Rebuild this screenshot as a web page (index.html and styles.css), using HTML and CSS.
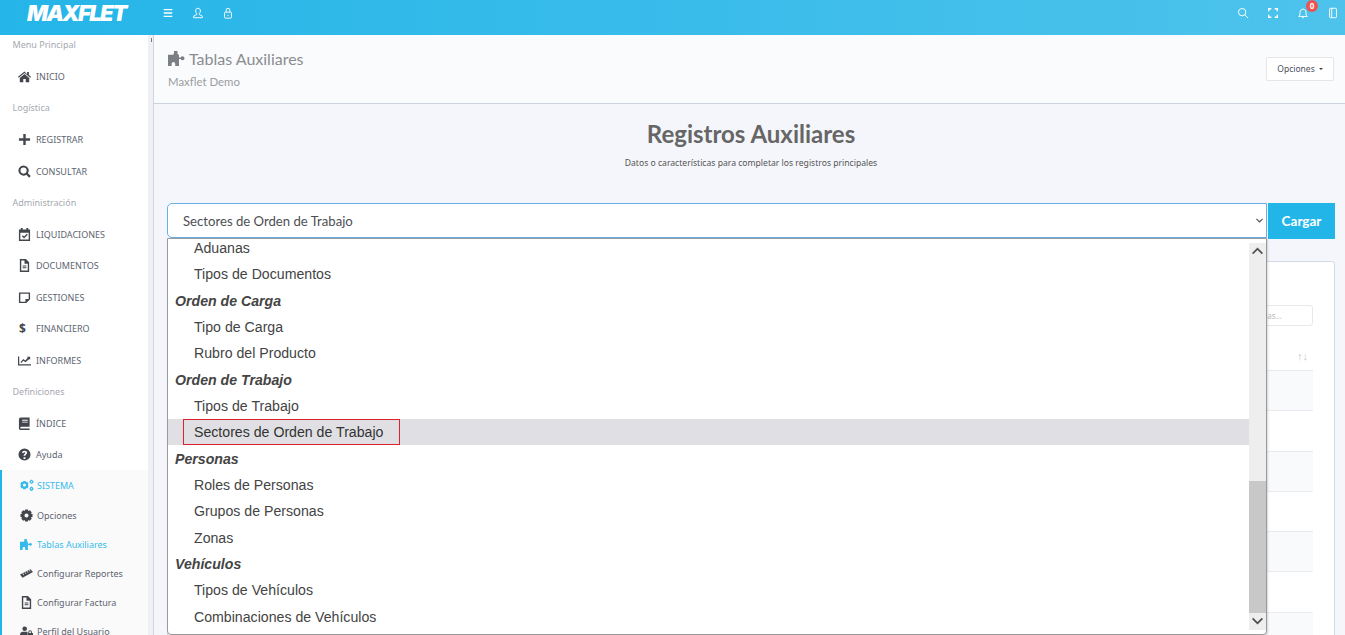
FILE: index.html
```html
<!DOCTYPE html>
<html lang="es">
<head>
<meta charset="utf-8">
<title>Maxflet - Tablas Auxiliares</title>
<link rel="stylesheet" href="styles.css">
</head>
<body>
<svg class="defs" aria-hidden="true">
  <symbol id="i-home" viewBox="0 0 16 14"><path d="M8 .8 0 7.400l.9 1.100L8 2.600l7.100 5.900.9-1.100-2.600-2.100V1.400h-2.200v2.700zM2.200 8.800V14h4.300V10h3v4h4.300V8.800L8 4z"/></symbol>
  <symbol id="i-plus" viewBox="0 0 14 14"><path d="M5.700 1h2.600v4.700H13v2.600H8.300V13H5.700V8.300H1V5.700h4.700z"/></symbol>
  <symbol id="i-search" viewBox="0 0 14 14"><path d="M6 .5a5.500 5.500 0 1 0 3 10.100l3 3 1.700-1.700-3-3A5.500 5.500 0 0 0 6 .5zm0 2.200a3.300 3.300 0 1 1 0 6.600 3.300 3.300 0 0 1 0-6.600z"/></symbol>
  <symbol id="i-cal" viewBox="0 0 14 14"><path fill-rule="evenodd" d="M3 0h2v1.500h4V0h2v1.500h2V14H1V1.500h2zM2.500 5v7.500h9V5zm7 1.200 1 1-4 4-2.300-2.300 1-1 1.300 1.300z"/></symbol>
  <symbol id="i-file" viewBox="0 0 14 14"><path fill-rule="evenodd" d="M2 0h6.500L12 3.500V14H2zm1.500 1.500v11h7V5H7V1.500zM5 7h4v1H5zm0 2h4v1H5z"/></symbol>
  <symbol id="i-note" viewBox="0 0 14 14"><path fill-rule="evenodd" d="M1 1.500h12V9l-4 4H1zm1.500 1.500v8.500H8V8.500h3.500V3z"/></symbol>
  <symbol id="i-chart" viewBox="0 0 16 14"><path d="M0 2h1.500v9.500H16V13H0zM3 9l3.500-4 2.500 2 3-3.500-1-1H15v3.500l-1-1L9.200 9.300 6.700 7.200 4 10.200z"/></symbol>
  <symbol id="i-book" viewBox="0 0 14 14"><path fill-rule="evenodd" d="M3 .5h9.500v10H3.500a1 1 0 0 0 0 2h9V14H3a2 2 0 0 1-2-2V2.500a2 2 0 0 1 2-2zm1.500 2.500v1h6V3zm0 2v1h6V5z"/></symbol>
  <symbol id="i-help" viewBox="0 0 14 14"><path fill-rule="evenodd" d="M7 .5a6.500 6.500 0 1 1 0 13 6.500 6.500 0 0 1 0-13zM6 10v1.800h2V10zM7 3C5.500 3 4.500 3.800 4.300 5.200l1.700.3c.1-.6.400-.9 1-.9s.9.300.9.700c0 .9-1.900 1-1.900 3h1.900c0-1.200 1.900-1.400 1.900-3.100C9.800 4 8.600 3 7 3z"/></symbol>
  <symbol id="i-cogs" viewBox="0 0 18 14"><path fill-rule="evenodd" d="M5 1.500h3l.4 1.500 1.500-.5 1.600 2.700-1.100 1.300 1.100 1.300L9.900 10.500l-1.500-.5-.4 1.500H5L4.600 10l-1.500.5L1.500 7.800l1.100-1.300-1.100-1.300 1.600-2.700 1.500.5zm1.500 3.200a1.800 1.800 0 1 0 0 3.600 1.800 1.800 0 0 0 0-3.600z"/><path fill-rule="evenodd" d="M14 0h2l.3 1 1 .6v1.800l-1 .6-.3 1h-2l-.3-1-1-.6V1.600l1-.6zm1 1.700a.8.800 0 1 0 0 1.600.8.800 0 0 0 0-1.600zM14 8.500h2l.3 1 1 .6v1.800l-1 .6-.3 1h-2l-.3-1-1-.6v-1.800l1-.6zm1 1.700a.8.800 0 1 0 0 1.600.8.800 0 0 0 0-1.600z"/></symbol>
  <symbol id="i-cog" viewBox="0 0 14 14"><path fill-rule="evenodd" d="M5.500.5h3l.4 1.700 1.600-.8 2.100 2.100-.8 1.600 1.700.4v3l-1.700.4.800 1.600-2.100 2.100-1.600-.8-.4 1.700h-3l-.4-1.700-1.600.8-2.100-2.100.8-1.600L.5 8.500v-3l1.700-.4-.8-1.600 2.100-2.100 1.600.8zM7 4.800a2.200 2.200 0 1 0 0 4.400 2.200 2.200 0 0 0 0-4.400z"/></symbol>
  <symbol id="i-puzzle" viewBox="0 0 18 15"><path d="M6 0h3.500v2.200C9.500 3 10 3.200 10.300 3.800H11V6.500h1.800c.3-.8 1-1.200 1.700-1.200 1.200 0 2 1 2 2s-.8 2-2 2c-.8 0-1.400-.4-1.700-1.200H11V15H7.200v-2c0-1.300-.9-2-1.800-2s-1.800.7-1.800 2v2H0V3.800h5c.4-.6 1-1 1-1.600z"/></symbol>
  <symbol id="i-ruler" viewBox="0 0 18 14"><path d="M0 8.500 14.500 1 18 5 3.500 13zM3.500 7.300l1.300 2 .8-.5-1.300-2zm3-1.600 1.300 2 .8-.5-1.300-2zm3-1.600 1.300 2 .8-.5-1.300-2zm3-1.600 1.300 2 .8-.5-1.300-2z"/></symbol>
  <symbol id="i-userlock" viewBox="0 0 18 14"><path d="M6.500 0a3.200 3.200 0 1 1 0 6.400 3.200 3.200 0 0 1 0-6.400zM0 14v-2.500C0 9 2 7.500 4 7.500h5c.6 0 1 .1 1.500.3V14zM11.500 9V7.800a2.500 2.500 0 0 1 5 0V9H18v5h-7V9zm1.300 0h2.400V7.800a1.200 1.200 0 0 0-2.400 0z"/></symbol>
  <symbol id="i-chev" viewBox="0 0 14 10"><path d="M1.500 1 7 6.200 12.500 1 14 2.500 7 9.500 0 2.500z"/></symbol>
</svg>

<header class="topbar">
  <div class="logo">MAXFLET</div>
  <nav class="top-left">
    <svg class="tb-icon bold" viewBox="0 0 14 14"><path d="M2 3h10M2 7h10M2 11h10"/></svg>
    <svg class="tb-icon" viewBox="0 0 14 14"><path d="M7 1.500c-1.800 0-2.800 1.200-2.800 3 0 1.300.6 2.400 1.300 3v1.300L2 10.500v2h10v-2L8.500 8.800V7.500c.7-.6 1.300-1.700 1.300-3 0-1.800-1-3-2.800-3z"/></svg>
    <svg class="tb-icon" viewBox="0 0 14 14"><rect x="3" y="6" width="8" height="7" rx="1"/><path d="M4.800 6V3.800a2.200 2.200 0 0 1 4.400 0V6M7 9v1.500"/></svg>
  </nav>
  <nav class="top-right">
    <svg class="tb-icon" viewBox="0 0 14 14"><circle cx="6" cy="6" r="4.300"/><path d="m9.200 9.200 3.800 3.800"/></svg>
    <svg class="tb-icon bold" viewBox="0 0 14 14"><path d="M2 5V2h3M9 2h3v3M12 9v3H9M5 12H2V9"/></svg>
    <span class="bell">
      <svg class="tb-icon" viewBox="0 0 14 14"><path d="M2 11c1.200-1 1.500-2 1.500-4.500C3.500 4 5 2.500 7 2.500s3.500 1.500 3.500 4c0 2.500.3 3.500 1.500 4.500zM6 12.500h2"/></svg>
      <b class="badge">0</b>
    </span>
    <svg class="tb-icon" viewBox="0 0 14 14"><rect x="3" y="1.500" width="8" height="11" rx="1"/><path d="M5.500 1.500v11"/></svg>
  </nav>
</header>

<div class="shell">
  <aside class="sidebar">
    <div class="side-inner">
      <p class="side-label">Menu Principal</p>
      <a class="side-item"><svg class="ic"><use href="#i-home"/></svg>INICIO</a>
      <p class="side-label">Logística</p>
      <a class="side-item"><svg class="ic"><use href="#i-plus"/></svg>REGISTRAR</a>
      <a class="side-item"><svg class="ic"><use href="#i-search"/></svg>CONSULTAR</a>
      <p class="side-label">Administración</p>
      <a class="side-item"><svg class="ic"><use href="#i-cal"/></svg>LIQUIDACIONES</a>
      <a class="side-item"><svg class="ic"><use href="#i-file"/></svg>DOCUMENTOS</a>
      <a class="side-item"><svg class="ic"><use href="#i-note"/></svg>GESTIONES</a>
      <a class="side-item"><span class="ic dollar">$</span>FINANCIERO</a>
      <a class="side-item"><svg class="ic"><use href="#i-chart"/></svg>INFORMES</a>
      <p class="side-label">Definiciones</p>
      <a class="side-item"><svg class="ic"><use href="#i-book"/></svg>ÍNDICE</a>
      <a class="side-item"><svg class="ic"><use href="#i-help"/></svg>Ayuda</a>
      <div class="side-group">
        <a class="side-item active"><svg class="ic wide"><use href="#i-cogs"/></svg>SISTEMA</a>
        <a class="side-sub"><svg class="ic"><use href="#i-cog"/></svg>Opciones</a>
        <a class="side-sub active"><svg class="ic"><use href="#i-puzzle"/></svg>Tablas Auxiliares</a>
        <a class="side-sub"><svg class="ic"><use href="#i-ruler"/></svg>Configurar Reportes</a>
        <a class="side-sub"><svg class="ic"><use href="#i-file"/></svg>Configurar Factura</a>
        <a class="side-sub"><svg class="ic"><use href="#i-userlock"/></svg>Perfil del Usuario</a>
      </div>
    </div>
  </aside>
  <div class="gutter"><span class="notch"></span></div>
  <main class="main">
    <section class="page-head">
      <div>
        <h1 class="page-title"><svg class="title-ic"><use href="#i-puzzle"/></svg>Tablas Auxiliares</h1>
        <p class="page-sub">Maxflet Demo</p>
      </div>
      <button class="opt-btn">Opciones<i class="caret"></i></button>
    </section>
    <section class="content">
      <h2 class="heading">Registros Auxiliares</h2>
      <p class="subheading">Datos o características para completar los registros principales</p>
      <div class="picker">
        <div class="select">Sectores de Orden de Trabajo<svg class="sel-chev"><use href="#i-chev"/></svg></div>
        <button class="load">Cargar</button>
        <div class="listbox">
          <ul class="options">
            <li class="opt">Aduanas</li>
            <li class="opt">Tipos de Documentos</li>
            <li class="grp">Orden de Carga</li>
            <li class="opt">Tipo de Carga</li>
            <li class="opt">Rubro del Producto</li>
            <li class="grp">Orden de Trabajo</li>
            <li class="opt">Tipos de Trabajo</li>
            <li class="opt sel"><span class="focus">Sectores de Orden de Trabajo</span></li>
            <li class="grp">Personas</li>
            <li class="opt">Roles de Personas</li>
            <li class="opt">Grupos de Personas</li>
            <li class="opt">Zonas</li>
            <li class="grp">Vehículos</li>
            <li class="opt">Tipos de Vehículos</li>
            <li class="opt">Combinaciones de Vehículos</li>
          </ul>
          <div class="scroll">
            <svg class="sb-arrow up"><use href="#i-chev"/></svg>
            <div class="thumb"></div>
            <svg class="sb-arrow"><use href="#i-chev"/></svg>
          </div>
        </div>
      </div>
      <div class="card">
        <div class="card-tools"><div class="filter">Buscar en tablas...</div></div>
        <div class="thead"><span class="sort">↑↓</span></div>
        <div class="row odd"></div>
        <div class="row"></div>
        <div class="row odd"></div>
        <div class="row"></div>
        <div class="row odd"></div>
        <div class="row"></div>
        <div class="row odd"></div>
      </div>
    </section>
  </main>
</div>
</body>
</html>
```
FILE: styles.css
```css
* { box-sizing: border-box; }
html, body { margin: 0; height: 635px; overflow: hidden; }
body { font-family: "Noto Sans", sans-serif; background: #f4f6fb; color: #555; }
.defs { display: none; }

.topbar {
  height: 35px; display: flex; align-items: center;
  background: linear-gradient(90deg, #25b5e8 0%, #4dc3ec 100%);
  padding: 0 6px 9px 27px; color: #fff;
}
.logo {
  width: 135px; font-family: "Inter", sans-serif; font-weight: 900; font-style: italic;
  font-size: 22px; letter-spacing: -1.600px; line-height: 26px; color: #fff;
}
.top-left { display: flex; gap: 18px; }
.top-right { display: flex; gap: 18px; margin-left: auto; }
.tb-icon { width: 12px; height: 12px; fill: none; stroke: #fff; stroke-width: 1.1; display: block; }
.tb-icon.bold { stroke-width: 1.600; }
.bell { position: relative; display: block; }
.badge {
  position: absolute; top: -7px; left: 9px; width: 12px; height: 12px; border-radius: 50%;
  background: #ef5350; color: #fff; font-size: 8px; line-height: 12px; text-align: center;
}

.shell { display: flex; height: 600px; }
.sidebar { width: 148px; background: #fff; overflow: hidden; flex: none; }
.side-inner { margin-top: -5.600px; }
.side-label {
  margin: 0; height: 31.500px; line-height: 32.500px; padding-left: 12.500px;
  font-size: 9px; color: #a5a9b0;
}
.side-item, .side-sub { display: flex; align-items: center; color: #5d6470; font-size: 9px; }
.side-item { height: 31.500px; padding-left: 18px; }
.ic { width: 13px; height: 13px; margin-right: 5px; fill: #43474d; flex: none; }
.ic.wide { width: 15px; margin-right: 3px; }
.dollar { font-size: 12px; font-weight: 700; line-height: 13px; color: #43474d; text-align: left; padding-left: 1px; }
.side-group { background: #fafafa; border-left: 2px solid #22b5e8; padding-bottom: 20px; }
.side-group .side-item { height: 31px; padding-left: 17px; }
.side-sub { height: 29px; padding-left: 18px; }
.side-sub .ic { margin-right: 4px; }
.active { color: #35bbea; }
.active .ic { fill: #35bbea; }

.gutter { width: 6px; flex: none; background: #eff0f4; border-right: 1px solid #cfd6df; position: relative; }
.notch { position: absolute; left: 3px; top: 3px; width: 1px; height: 4px; background: #777; }

.main { flex: 1; min-width: 0; overflow: hidden; }
.page-head {
  height: 69px; display: flex; justify-content: space-between; align-items: center;
  background: #fafbfd; border-bottom: 1px solid #ccd3dc; padding: 0 11px 0 14px;
}
.page-title { margin: 0; display: flex; align-items: center; font-family: "Lato", sans-serif; font-size: 16px; font-weight: 400; line-height: 22px; color: #8a8d91; }
.title-ic { width: 18px; height: 15px; margin-right: 3px; fill: #7b7e82; }
.page-sub { margin: 3px 0 0; font-family: "Lato", sans-serif; font-size: 11.400px; line-height: 18px; color: #999da1; }
.opt-btn {
  width: 68px; height: 24px; background: #fff; border: 1px solid #e4e6ea; border-radius: 2px; padding: 0 0 2px;
  font: 8.500px "Noto Sans", sans-serif; color: #4a5060;
}
.caret { display: inline-block; margin-left: 4px; vertical-align: 2px; border: 2.500px solid transparent; border-top-color: #444; border-bottom: 0; }

.content { padding: 0 10px 0 13px; }
.heading { margin: 15px 0 0; text-align: center; font-family: "Lato", sans-serif; font-size: 24px; font-weight: 700; line-height: 30px; color: #666; }
.subheading { margin: 7px 0 0; text-align: center; font-size: 8.600px; line-height: 14px; color: #555; }

.picker { position: relative; display: flex; margin-top: 33px; height: 36px; }
.select {
  flex: 1; height: 35px; background: #fff; border: 1px solid #66b0ea; border-radius: 5px 0 0 5px;
  padding-left: 15px; font-family: "Lato", sans-serif; font-size: 13.150px; line-height: 34px; color: #4d4f54; position: relative;
}
.sel-chev { position: absolute; right: 3px; top: 14px; width: 7px; height: 5px; fill: #555; }
.load {
  width: 67px; margin-left: 1px; border: 0; background: #22b6e8; color: #fff; padding: 0;
  font: 700 13.500px "Lato", sans-serif;
}
.listbox {
  position: absolute; left: 0; top: 35px; width: 1100px; height: 397px; display: flex;
  background: #fff; border: 1px solid #9a9a9a; border-radius: 0 0 4px 4px; overflow: hidden;
  box-shadow: 1px 1px 2px rgba(0,0,0,.15); z-index: 2;
}
.options {
  flex: 1; margin: -4px 0 0; padding: 0; list-style: none;
  font-family: "Liberation Sans", Arial, sans-serif; font-size: 14.150px; color: #444;
}
.options li { height: 26.330px; line-height: 26.330px; }
.opt { padding-left: 26px; }
.grp { padding-left: 7px; font-weight: 700; font-style: italic; color: #444; }
.options .sel { background: #e0dfe4; padding-left: 15px; height: 26px; margin-bottom: .330px; }
.focus { display: block; height: 26px; line-height: 24.500px; padding: 0 13px 0 10px; border: 1px solid #e0202c; color: #333; width: 217px; white-space: nowrap; }
.scroll { width: 17px; display: flex; flex-direction: column; background: #eee; margin: 4px 0; height: 387px; }
.sb-arrow { width: 11px; height: 8px; fill: #505050; margin: 4px 3px 5px; flex: none; }
.sb-arrow.up { transform: rotate(180deg); margin-top: 4px; }
.thumb { background: #c8c8c8; height: 132px; margin-top: 221px; flex: none; }

.card {
  margin-top: 22px; height: 420px; background: #fff; border: 1px solid #cfdce5; border-radius: 3px;
  padding: 43px 21px 0;
}
.card-tools { display: flex; justify-content: flex-end; }
.filter {
  width: 160px; height: 21px; border: 1px solid #e6e8ec; border-radius: 3px; background: #fff;
  padding-right: 30px; text-align: right; font-size: 8px; line-height: 19px; color: #bbb;
}
.thead { height: 45px; border-bottom: 1px solid #e9ebef; display: flex; justify-content: flex-end; align-items: flex-end; padding: 0 5px 8px; }
.sort { font-family: "Liberation Sans", sans-serif; font-size: 11px; line-height: 12px; color: #c4c7cc; }
.row { height: 40.300px; border-bottom: 1px solid #e9ebef; }
.row.odd { background: #f9fafc; }
```
